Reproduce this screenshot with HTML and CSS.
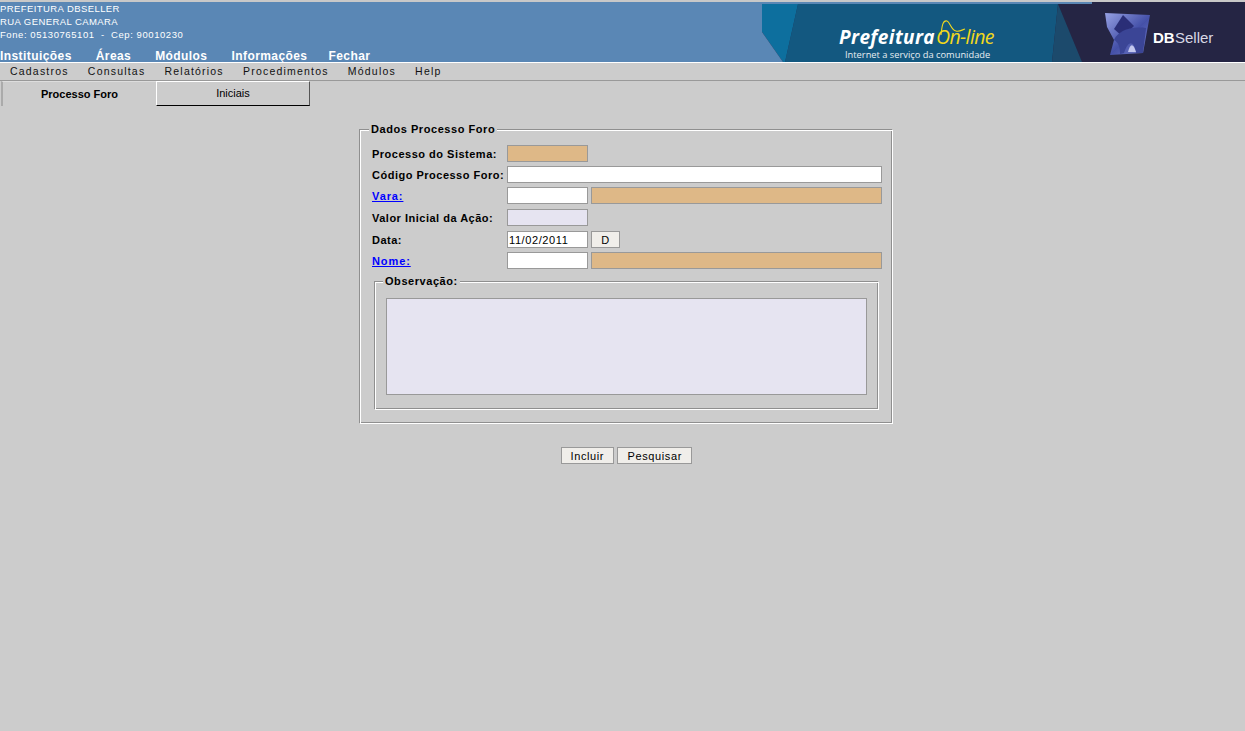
FILE: index.html
```html
<!DOCTYPE html>
<html lang="pt">
<head>
<meta charset="utf-8">
<title>Processo Foro</title>
<link rel="stylesheet" href="styles.css">
</head>
<body>
<header class="top">
  <div class="inst">
    <div class="inst-lines">
      <div>PREFEITURA DBSELLER</div>
      <div>RUA GENERAL CAMARA</div>
      <div class="inst-phone">Fone: 05130765101 &nbsp;- &nbsp;Cep: 90010230</div>
    </div>
    <nav class="mainnav">
      <span>Instituições</span><span>Áreas</span><span>Módulos</span><span>Informações</span><span class="nav-last">Fechar</span>
    </nav>
  </div>
  <svg class="banner" width="483" height="60" viewBox="0 0 483 60">
    <defs>
      <linearGradient id="cube" x1="0" y1="0" x2="1" y2="1">
        <stop offset="0" stop-color="#97a2e4"/>
        <stop offset="0.55" stop-color="#4450a8"/>
        <stop offset="1" stop-color="#7d86cc"/>
      </linearGradient>
      <filter id="soft"><feGaussianBlur stdDeviation="0.6"/></filter>
    </defs>
    <rect width="483" height="60" fill="#252544"/>
    <polygon points="0,0 330,0 330,2 0,2" fill="#5a87b5"/>
    <polygon points="296,2 320,60 483,60 483,2" fill="#252544"/>
    <polygon points="36,2 296,2 290,60 23,60" fill="#135880"/>
    <polygon points="296,2 290,60 320,60" fill="#1c4a6c"/>
    <polygon points="0,2 36,2 23,60 21,60 0,30" fill="#0d6f9e"/>
    <polygon points="0,30 21,60 0,60" fill="#5a87b5"/>
    <text x="77" y="42" class="b-pref">Prefeitura</text>
    <text x="174" y="42" class="b-online">On-line</text>
    <path d="M179 33 C180 23 181 18 185 19 C188 20 189 28 194 29 C197 30 200 28 203 27" fill="none" stroke="#f2d81c" stroke-width="1.1"/>
    <text x="83" y="56" class="b-sub">Internet a serviço da comunidade</text>
    <g filter="url(#soft)">
      <polygon points="343,11 388,13 381,51 348,53 352,38 345,25" fill="url(#cube)"/>
      <polygon points="361,13 372,24 361,35 352,27" fill="#2b2f77"/>
      <path d="M352 38 C356 30 366 24 384 26 L381 51 L374 51 C372 38 366 38 362 51 L358 52 C358 44 356 40 352 38 Z" fill="#3a4496"/>
      <path d="M366 50 C368 42 371 40 374 50 Z" fill="#c4c8ee"/>
    </g>
    <text x="391" y="41" class="b-db">DB</text>
    <text x="413" y="41" class="b-seller">Seller</text>
  </svg>
</header>
<nav class="menubar">
  <span>Cadastros</span><span>Consultas</span><span>Relatórios</span><span>Procedimentos</span><span>Módulos</span><span>Help</span>
</nav>
<div class="tabs">
  <div class="tab tab-active">Processo Foro</div>
  <div class="tab tab-idle">Iniciais</div>
</div>
<main class="content">
  <fieldset class="box">
    <legend>Dados Processo Foro</legend>
    <div class="rows">
      <label>Processo do Sistema:</label>
      <div class="cells"><input class="f short tan" readonly></div>
      <label>Código Processo Foro:</label>
      <div class="cells"><input class="f long"></div>
      <label><a href="#">Vara:</a></label>
      <div class="cells"><input class="f short"><input class="f wide tan" readonly></div>
      <label>Valor Inicial da Ação:</label>
      <div class="cells"><input class="f short lav"></div>
      <label>Data:</label>
      <div class="cells"><input class="f short" value="11/02/2011"><button class="btn btn-d" type="button">D</button></div>
      <label><a href="#">Nome:</a></label>
      <div class="cells"><input class="f short"><input class="f wide tan" readonly></div>
    </div>
    <fieldset class="box inner">
      <legend>Observação:</legend>
      <textarea class="obs"></textarea>
    </fieldset>
  </fieldset>
  <div class="actions">
    <button class="btn" type="button">Incluir</button>
    <button class="btn btn-wide" type="button">Pesquisar</button>
  </div>
</main>
</body>
</html>
```
FILE: styles.css
```css
* { box-sizing: border-box; }
html, body { height: 100%; }
body {
  margin: 0;
  background: #cccccc;
  font-family: "Liberation Sans", Arial, sans-serif;
  font-size: 11px;
  color: #000;
  overflow: hidden;
}
.top {
  display: flex;
  justify-content: space-between;
  height: 62px;
  background: #5a87b5;
  border-top: 2px solid #c8c8c8;
}
.inst { color: #fff; display: flex; flex-direction: column; justify-content: space-between; }
.inst-lines { font-size: 9.5px; line-height: 13px; letter-spacing: 0.42px; }
.inst-phone { letter-spacing: 0.56px; }
.mainnav { display: flex; gap: 24px; font-size: 12px; font-weight: bold; letter-spacing: 0.42px; line-height: 12px; }
.nav-last { margin-left: -3px; }
.banner { display: block; }
.b-pref { font: italic bold 19px "Open Sans", sans-serif; letter-spacing: 0.4px; fill: #fff; }
.b-online { font: italic 400 19.5px "Open Sans", sans-serif; letter-spacing: -0.6px; fill: #f2d81c; }
.b-sub { font: 9.3px "Open Sans", sans-serif; fill: #e8eef2; }
.b-db { font: bold 15px "Liberation Sans", sans-serif; fill: #fff; }
.b-seller { font: 15px "Liberation Sans", sans-serif; fill: #d8d8e4; }
.menubar {
  display: flex;
  gap: 19.2px;
  height: 19px;
  padding-left: 10px;
  border-top: 1px solid #fff;
  border-bottom: 1px solid #999;
  font-size: 10.5px;
  letter-spacing: 1.2px;
  line-height: 17px;
  color: #111;
}
.tabs { display: flex; height: 25px; padding-left: 1px; }
.tab { width: 155px; text-align: center; }
.tab-active { font-weight: bold; line-height: 24px; border-left: 2px solid #aaa; border-top: 1px solid #ddd; }
.tab-idle { width: 154px; line-height: 22px; border: 1px solid #fff; border-right-color: #555; border-bottom-color: #000; }
.content { margin: 17px 0 0 359px; width: 534px; }
.box {
  margin: 0;
  padding: 9px 10px 12px 12px;
  border: 1px solid;
  border-color: #8f8f8f #fff #fff #8f8f8f;
  box-shadow: inset 1px 1px 0 #fff, inset -1px -1px 0 #8f8f8f;
  min-width: 0;
  height: 301px;
}
.box legend {
  font-weight: bold;
  font-size: 11px;
  padding: 0 2px;
  margin-left: -3px;
  letter-spacing: 0.55px;
  line-height: 13px;
  background: #cccccc;
}
.rows {
  display: grid;
  grid-template-columns: 135px 1fr;
  grid-template-rows: 17px 17px 18px 18px 17px 17px;
  row-gap: 4px;
  align-items: start;
}
.rows label { font-weight: bold; letter-spacing: 0.5px; line-height: 18px; }
.rows a { color: #00f; letter-spacing: 0.9px; }
.cells { display: flex; gap: 3px; height: 17px; }
.f {
  height: 17px;
  border: 1px solid #999;
  background: #fff;
  padding: 0 1px;
  margin: 0;
  font: 11px "Liberation Sans", sans-serif;
  letter-spacing: 0.6px;
  outline: none;
}
.short { width: 81px; }
.long { width: 375px; }
.wide { width: 291px; }
.tan { background: #deb887; }
.lav { background: #e6e4f1; }
.btn {
  height: 17px;
  padding: 0 9px;
  border: 1px solid #999;
  background: #f0eeea;
  font: 11px "Liberation Sans", sans-serif;
  letter-spacing: 0.6px;
  color: #000;
  margin: 0;
}
.btn-wide { padding: 0 9.5px; }
.btn-d { width: 29px; padding: 0; }
.box.inner { margin: 6px 0 0 2px; width: 505px; height: 135px; padding: 10px 11px; }
.obs {
  display: block;
  width: 481px;
  height: 97px;
  border: 1px solid #999;
  background: #e6e4f1;
  resize: none;
  outline: none;
}
.actions { display: flex; justify-content: center; gap: 3px; margin-top: 23px; padding-left: 1px; }
```
